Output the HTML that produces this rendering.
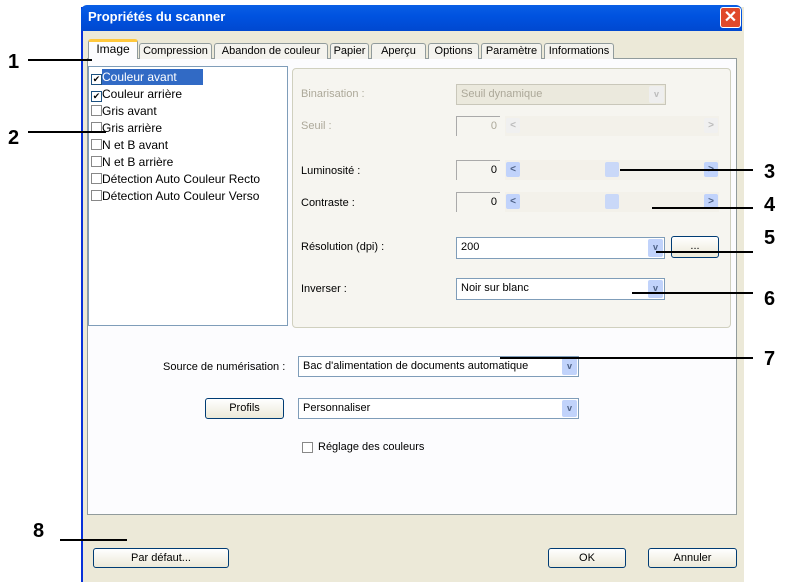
<!DOCTYPE html><html><head><meta charset="utf-8"><style>
body{margin:0;width:790px;height:585px;background:#fff;position:relative;overflow:hidden;font-family:"Liberation Sans",sans-serif;font-size:11px;color:#000}
.a{position:absolute}
.num{position:absolute;font-weight:bold;font-size:20px;font-family:"Liberation Sans",sans-serif}
.ln{position:absolute;height:2px;background:#000}
.cb{position:absolute;width:11px;height:11px;border:1px solid #1c5180;background:#fff;box-sizing:border-box}
.combo{position:absolute;background:#fff;border:1px solid #7f9db9;box-sizing:border-box;padding:3px 4px}
.dd{position:absolute;right:1px;top:1px;bottom:1px;width:15px;background:#c1d3fb;border-radius:2px;text-align:center;color:#4d6185;font-size:9px;line-height:17px;font-weight:bold}
.btn{position:absolute;border:1px solid #003c74;border-radius:3px;background:linear-gradient(#fff,#ece9d8);box-sizing:border-box;text-align:center;line-height:18px}
.edit{position:absolute;border-top:1px solid #aaa;border-left:1px solid #aaa;box-sizing:border-box;text-align:right;padding:3px 3px 0 0}
.sb{position:absolute;background:#f3f1ea;height:20px}
.arr{position:absolute;top:2px;width:14px;height:15px;background:#c1d3fb;border-radius:2px;color:#4d6185;font-size:10px;text-align:center;line-height:15px;font-weight:bold}
.grey{color:#aca899}
.tab{position:absolute;top:43px;height:15px;border:1px solid #919b9c;border-bottom:none;border-radius:3px 3px 0 0;background:#f4f3ee;box-sizing:border-box;text-align:center;line-height:14px;height:16px}
.row{height:17px;line-height:17px;font-size:12px;white-space:nowrap}
.row i{display:inline-block;width:11px;height:11px;border:1px solid #888;box-sizing:border-box;vertical-align:-1px;font-style:normal;font-size:9px;line-height:9px;text-align:center;background:#fff}
</style></head><body>
<div class="a" style="left:81px;top:7px;width:663px;height:575px;background:#ece9d8;border-left:2px solid #0831d9;box-sizing:border-box"></div>
<div class="a" style="left:81px;top:5px;width:661px;height:26px;background:linear-gradient(#0a5fe5,#0053e0 40%,#0048d0);border-radius:6px 6px 0 0"></div>
<div class="a" style="left:88px;top:9px;color:#fff;font-weight:bold;font-size:13px">Propriétés du scanner</div>
<div class="a" style="left:720px;top:7px;width:21px;height:21px;background:#e0492a;border:1px solid #fff;box-sizing:border-box;border-radius:3px;color:#fff;text-align:center;font-size:16px;line-height:19px;font-weight:bold">✕</div>
<!-- tabs -->
<div class="a" style="left:87px;top:58px;width:650px;height:457px;background:#fcfcfe;border:1px solid #919b9c;box-sizing:border-box"></div>
<div class="tab" style="left:139px;width:73px">Compression</div>
<div class="tab" style="left:214px;width:114px">Abandon de couleur</div>
<div class="tab" style="left:330px;width:39px">Papier</div>
<div class="tab" style="left:371px;width:55px">Aperçu</div>
<div class="tab" style="left:428px;width:51px">Options</div>
<div class="tab" style="left:481px;width:61px">Paramètre</div>
<div class="tab" style="left:544px;width:70px">Informations</div>
<div class="a" style="left:88px;top:39px;width:50px;height:20px;border:1px solid #919b9c;border-bottom:none;border-top:3px solid #ffc83c;border-radius:3px 3px 0 0;background:#fcfcfe;box-sizing:border-box;text-align:center;line-height:15px;font-size:12px">Image</div>
<!-- list -->
<div class="a" style="left:88px;top:66px;width:200px;height:260px;background:#fff;border:1px solid #7f9db9;box-sizing:border-box"></div>
<div class="a" style="left:102px;top:69px;width:101px;height:16px;background:#316ac5"></div>
<div class="a" style="left:91px;top:69px">
<div class="row"><i style="border-color:#1c5180">✔</i><span style="color:#fff">Couleur avant</span></div>
<div class="row"><i style="border-color:#1c5180">✔</i>Couleur arrière</div>
<div class="row"><i></i>Gris avant</div>
<div class="row"><i></i>Gris arrière</div>
<div class="row"><i></i>N et B avant</div>
<div class="row"><i></i>N et B arrière</div>
<div class="row"><i></i>Détection Auto Couleur Recto</div>
<div class="row"><i></i>Détection Auto Couleur Verso</div>
</div>
<!-- group -->
<div class="a" style="left:292px;top:68px;width:439px;height:260px;background:#f6f5f0;border:1px solid #d0d0bf;border-radius:4px;box-sizing:border-box"></div>
<div class="a grey" style="left:301px;top:88px">Binarisation :</div>
<div class="combo grey" style="left:456px;top:84px;width:210px;height:21px;background:#ebe9dd;border-color:#c9c7ba">Seuil dynamique<div class="dd" style="background:#eee;color:#bbb">v</div></div>
<div class="a grey" style="left:301px;top:120px">Seuil :</div>
<div class="edit grey" style="left:456px;top:116px;width:44px;height:20px">0</div>
<div class="sb" style="left:505px;top:116px;width:214px"><div class="arr" style="left:1px;background:#f0f0f0;color:#bbb">&lt;</div><div class="arr" style="right:1px;background:#f0f0f0;color:#bbb">&gt;</div></div>
<div class="a" style="left:301px;top:165px">Luminosité :</div>
<div class="edit" style="left:456px;top:160px;width:44px;height:20px">0</div>
<div class="sb" style="left:505px;top:160px;width:214px"><div class="arr" style="left:1px">&lt;</div><div class="arr" style="left:100px;background:#c9d8f8"></div><div class="arr" style="right:1px">&gt;</div></div>
<div class="a" style="left:301px;top:197px">Contraste :</div>
<div class="edit" style="left:456px;top:192px;width:44px;height:20px">0</div>
<div class="sb" style="left:505px;top:192px;width:214px"><div class="arr" style="left:1px">&lt;</div><div class="arr" style="left:100px;background:#c9d8f8"></div><div class="arr" style="right:1px">&gt;</div></div>
<div class="a" style="left:301px;top:241px">Résolution (dpi) :</div>
<div class="combo" style="left:456px;top:237px;width:209px;height:22px">200<div class="dd">v</div></div>
<div class="btn" style="left:671px;top:236px;width:48px;height:22px">...</div>
<div class="a" style="left:301px;top:283px">Inverser :</div>
<div class="combo" style="left:456px;top:278px;width:209px;height:22px">Noir sur blanc<div class="dd">v</div></div>
<div class="a" style="left:163px;top:361px">Source de numérisation :</div>
<div class="combo" style="left:298px;top:356px;width:281px;height:21px">Bac d'alimentation de documents automatique<div class="dd">v</div></div>
<div class="btn" style="left:205px;top:398px;width:79px;height:21px">Profils</div>
<div class="combo" style="left:298px;top:398px;width:281px;height:21px">Personnaliser<div class="dd">v</div></div>
<div class="cb" style="left:302px;top:442px;border-color:#888"></div>
<div class="a" style="left:318px;top:441px">Réglage des couleurs</div>
<div class="btn" style="left:93px;top:548px;width:136px;height:20px">Par défaut...</div>
<div class="btn" style="left:548px;top:548px;width:78px;height:20px">OK</div>
<div class="btn" style="left:648px;top:548px;width:89px;height:20px">Annuler</div>
<!-- callouts -->
<div class="num" style="left:8px;top:51px">1</div><div class="ln" style="left:28px;top:59px;width:64px"></div>
<div class="num" style="left:8px;top:127px">2</div><div class="ln" style="left:28px;top:131px;width:78px"></div>
<div class="num" style="left:764px;top:161px">3</div><div class="ln" style="left:620px;top:169px;width:133px"></div>
<div class="num" style="left:764px;top:194px">4</div><div class="ln" style="left:652px;top:207px;width:101px"></div>
<div class="num" style="left:764px;top:227px">5</div><div class="ln" style="left:656px;top:251px;width:97px"></div>
<div class="num" style="left:764px;top:288px">6</div><div class="ln" style="left:632px;top:292px;width:121px"></div>
<div class="num" style="left:764px;top:348px">7</div><div class="ln" style="left:500px;top:357px;width:253px"></div>
<div class="num" style="left:33px;top:520px">8</div><div class="ln" style="left:60px;top:539px;width:67px"></div>
</body></html>
